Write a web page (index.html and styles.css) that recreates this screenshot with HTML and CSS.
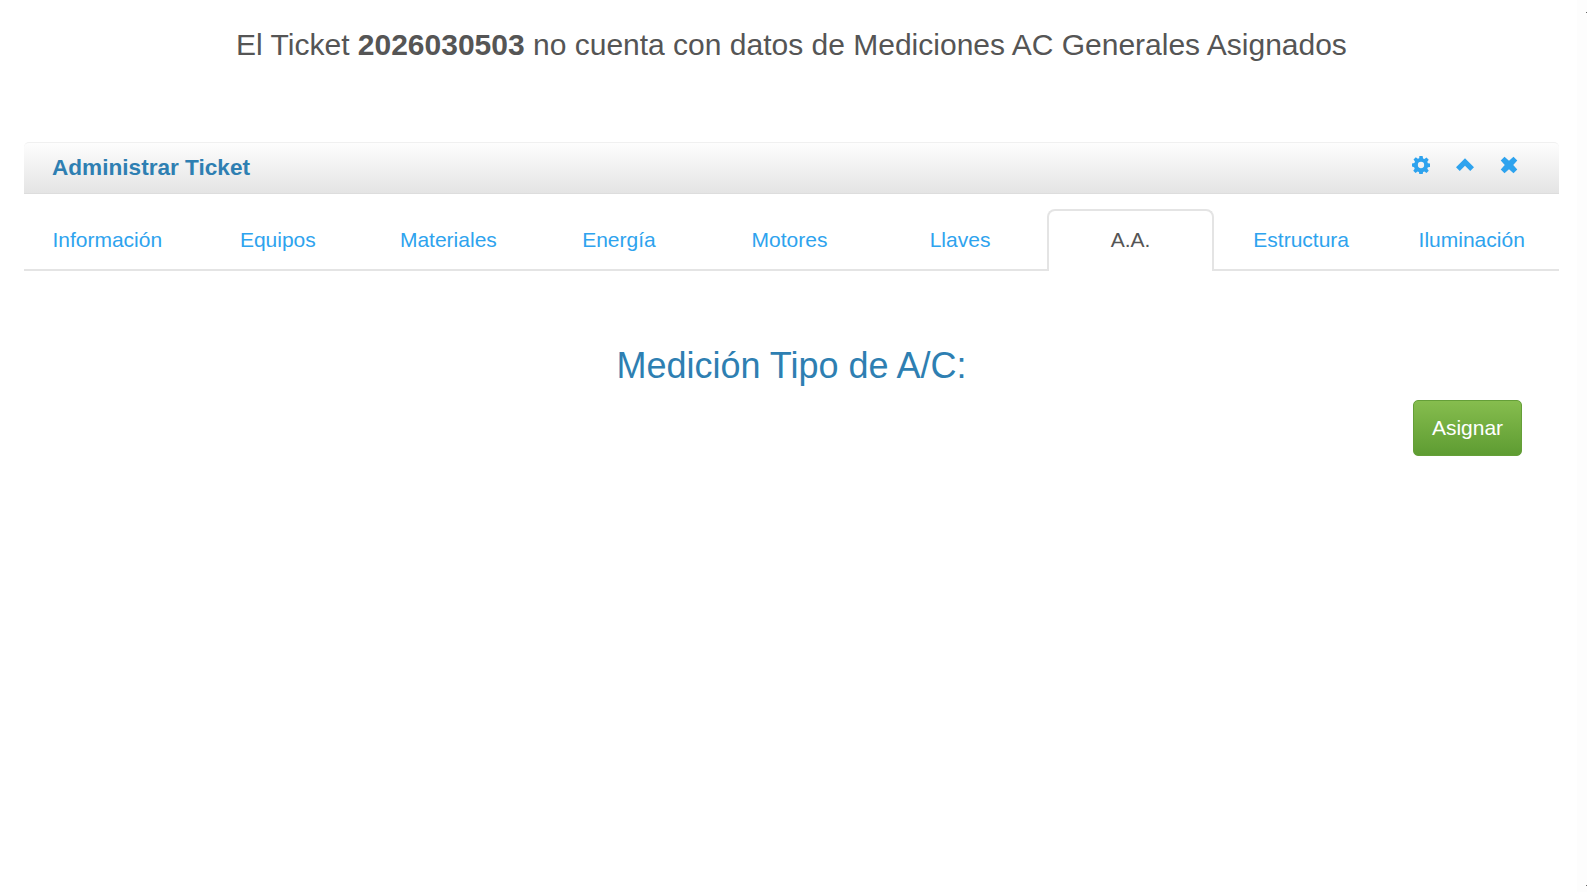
FILE: index.html
```html
<!DOCTYPE html>
<html lang="es">
	<head>
		<meta charset="UTF-8" />
		<title>Administrar Ticket</title>
		<link rel="stylesheet" href="styles.css">
	</head>
	<body>
		<div class="page">
			<h3 class="ticket-msg">El Ticket <b>2026030503</b> no cuenta con datos de Mediciones AC Generales Asignados</h3>

			<div class="panel">
				<div class="panel-header">
					<h4 class="panel-title">Administrar Ticket</h4>
					<div class="panel-tools">
						<a href="#" class="tool-link">
							<svg class="tool-icon" viewBox="0 0 20 20">
								<path fill-rule="evenodd" d="M8.200 0h3.600l.5 2.700 1.500.6L16.100 1.700l2.500 2.500-1.600 2.300.6 1.500 2.700.5v3.600l-2.700.5-.6 1.500 1.600 2.300-2.500 2.500-2.300-1.600-1.500.6-.5 2.700H8.200l-.5-2.700-1.500-.6-2.300 1.600-2.500-2.500 1.600-2.300-.6-1.500L0 11.800V8.200l2.700-.5.6-1.500-1.600-2.300 2.500-2.500 2.300 1.600 1.500-.6zM10 6.500a3.500 3.500 0 1 0 0 7 3.500 3.500 0 0 0 0-7z" />
							</svg>
						</a>
						<a href="#" class="tool-link">
							<svg class="tool-icon" viewBox="0 0 20 20">
								<path d="M10 2.500L20 12.500 15.800 16.700 10 10.900 4.200 16.700 0 12.500z" />
							</svg>
						</a>
						<a href="#" class="tool-link">
							<svg class="tool-icon" viewBox="0 0 20 20">
								<path d="M5 .8L10 5.300 15 .8 19.200 5 14.700 10 19.200 15 15 19.200 10 14.700 5 19.200 .8 15 5.300 10 .8 5z" />
							</svg>
						</a>
					</div>
				</div>

				<ul class="tabs">
					<li><a href="#">Información</a></li>
					<li><a href="#">Equipos</a></li>
					<li><a href="#">Materiales</a></li>
					<li><a href="#">Energía</a></li>
					<li><a href="#">Motores</a></li>
					<li><a href="#">Llaves</a></li>
					<li class="active"><a href="#">A.A.</a></li>
					<li><a href="#">Estructura</a></li>
					<li><a href="#">Iluminación</a></li>
				</ul>

				<div class="tab-content">
					<h3 class="section-title">Medición Tipo de A/C:</h3>
					<div class="actions">
						<button type="button" class="assign-button">Asignar</button>
					</div>
				</div>
			</div>
		</div>
		<div class="scroll-strip"></div>
	</body>
</html>
```

FILE: styles.css
```css
/* General styling */
html,
body {
	margin: 0;
	padding: 0;
	height: 100%;
	overflow: hidden;
}
body {
	font-family: "Liberation Sans", Arial, sans-serif;
	background-color: #fff;
	color: #555;
}

.page {
	width: 1583px;
	padding: 0 24px;
	box-sizing: border-box;
}

/* Faint strip where the scrollbar track sits */
.scroll-strip {
	position: fixed;
	top: 0;
	right: 0;
	bottom: 0;
	width: 10px;
	background-color: #fdfdfd;
}
.scroll-strip::before,
.scroll-strip::after {
	content: "";
	position: absolute;
	right: 0;
	width: 1px;
	height: 1px;
	background-color: #666;
}
.scroll-strip::before {
	top: 12px;
}
.scroll-strip::after {
	bottom: 6px;
}

.ticket-msg {
	margin: 0;
	padding-top: 26px;
	height: 142px;
	box-sizing: border-box;
	font-size: 30px;
	line-height: 38px;
	font-weight: normal;
	text-align: center;
	color: #555;
}

/* Panel header */
.panel-header {
	display: flex;
	justify-content: space-between;
	align-items: center;
	height: 52px;
	box-sizing: border-box;
	padding: 0 28px;
	background: linear-gradient(to bottom, #fdfdfd, #e4e4e4);
	border-top: 1px solid #f0f0f0;
	border-bottom: 1px solid #ddd;
	border-radius: 5px 5px 0 0;
}
.panel-title {
	margin: -1px 0 0;
	font-size: 22.6px;
	font-weight: bold;
	color: #2e7fb2;
}
.panel-tools {
	display: flex;
	align-items: center;
	gap: 26px;
	margin-top: -6px;
	margin-right: 13px;
}
.tool-link {
	display: flex;
}
.tool-icon {
	display: block;
	width: 18px;
	height: 18px;
	fill: #2ea3ee;
}

/* Tabs */
.tabs {
	display: grid;
	grid-template-columns: repeat(9, 1fr);
	margin: 0;
	padding: 15px 0 0;
	list-style: none;
	border-bottom: 2px solid #e4e4e4;
}
.tabs li {
	margin-bottom: -2px;
	padding-right: 4px;
}
.tabs a {
	display: block;
	height: 62px;
	box-sizing: border-box;
	border: 2px solid transparent;
	border-bottom: none;
	border-radius: 8px 8px 0 0;
	font-size: 21px;
	line-height: 58px;
	text-align: center;
	text-decoration: none;
	color: #2ea3ee;
}
.tabs .active a {
	background-color: #fff;
	border-color: #e4e4e4;
	color: #555;
}

/* Tab content */
.tab-content {
	padding: 0 37px;
}
.section-title {
	margin: 0;
	padding-top: 74px;
	font-size: 36px;
	line-height: 42px;
	font-weight: normal;
	text-align: center;
	color: #2e7fb2;
}
.actions {
	display: flex;
	justify-content: flex-end;
	margin-top: 13px;
}
.assign-button {
	width: 109px;
	height: 56px;
	padding: 0;
	background: linear-gradient(to bottom, #86bd4e, #5e9c32);
	border: 1px solid #659f38;
	border-radius: 5px;
	font-family: inherit;
	font-size: 21px;
	color: #fff;
	cursor: pointer;
}
```
